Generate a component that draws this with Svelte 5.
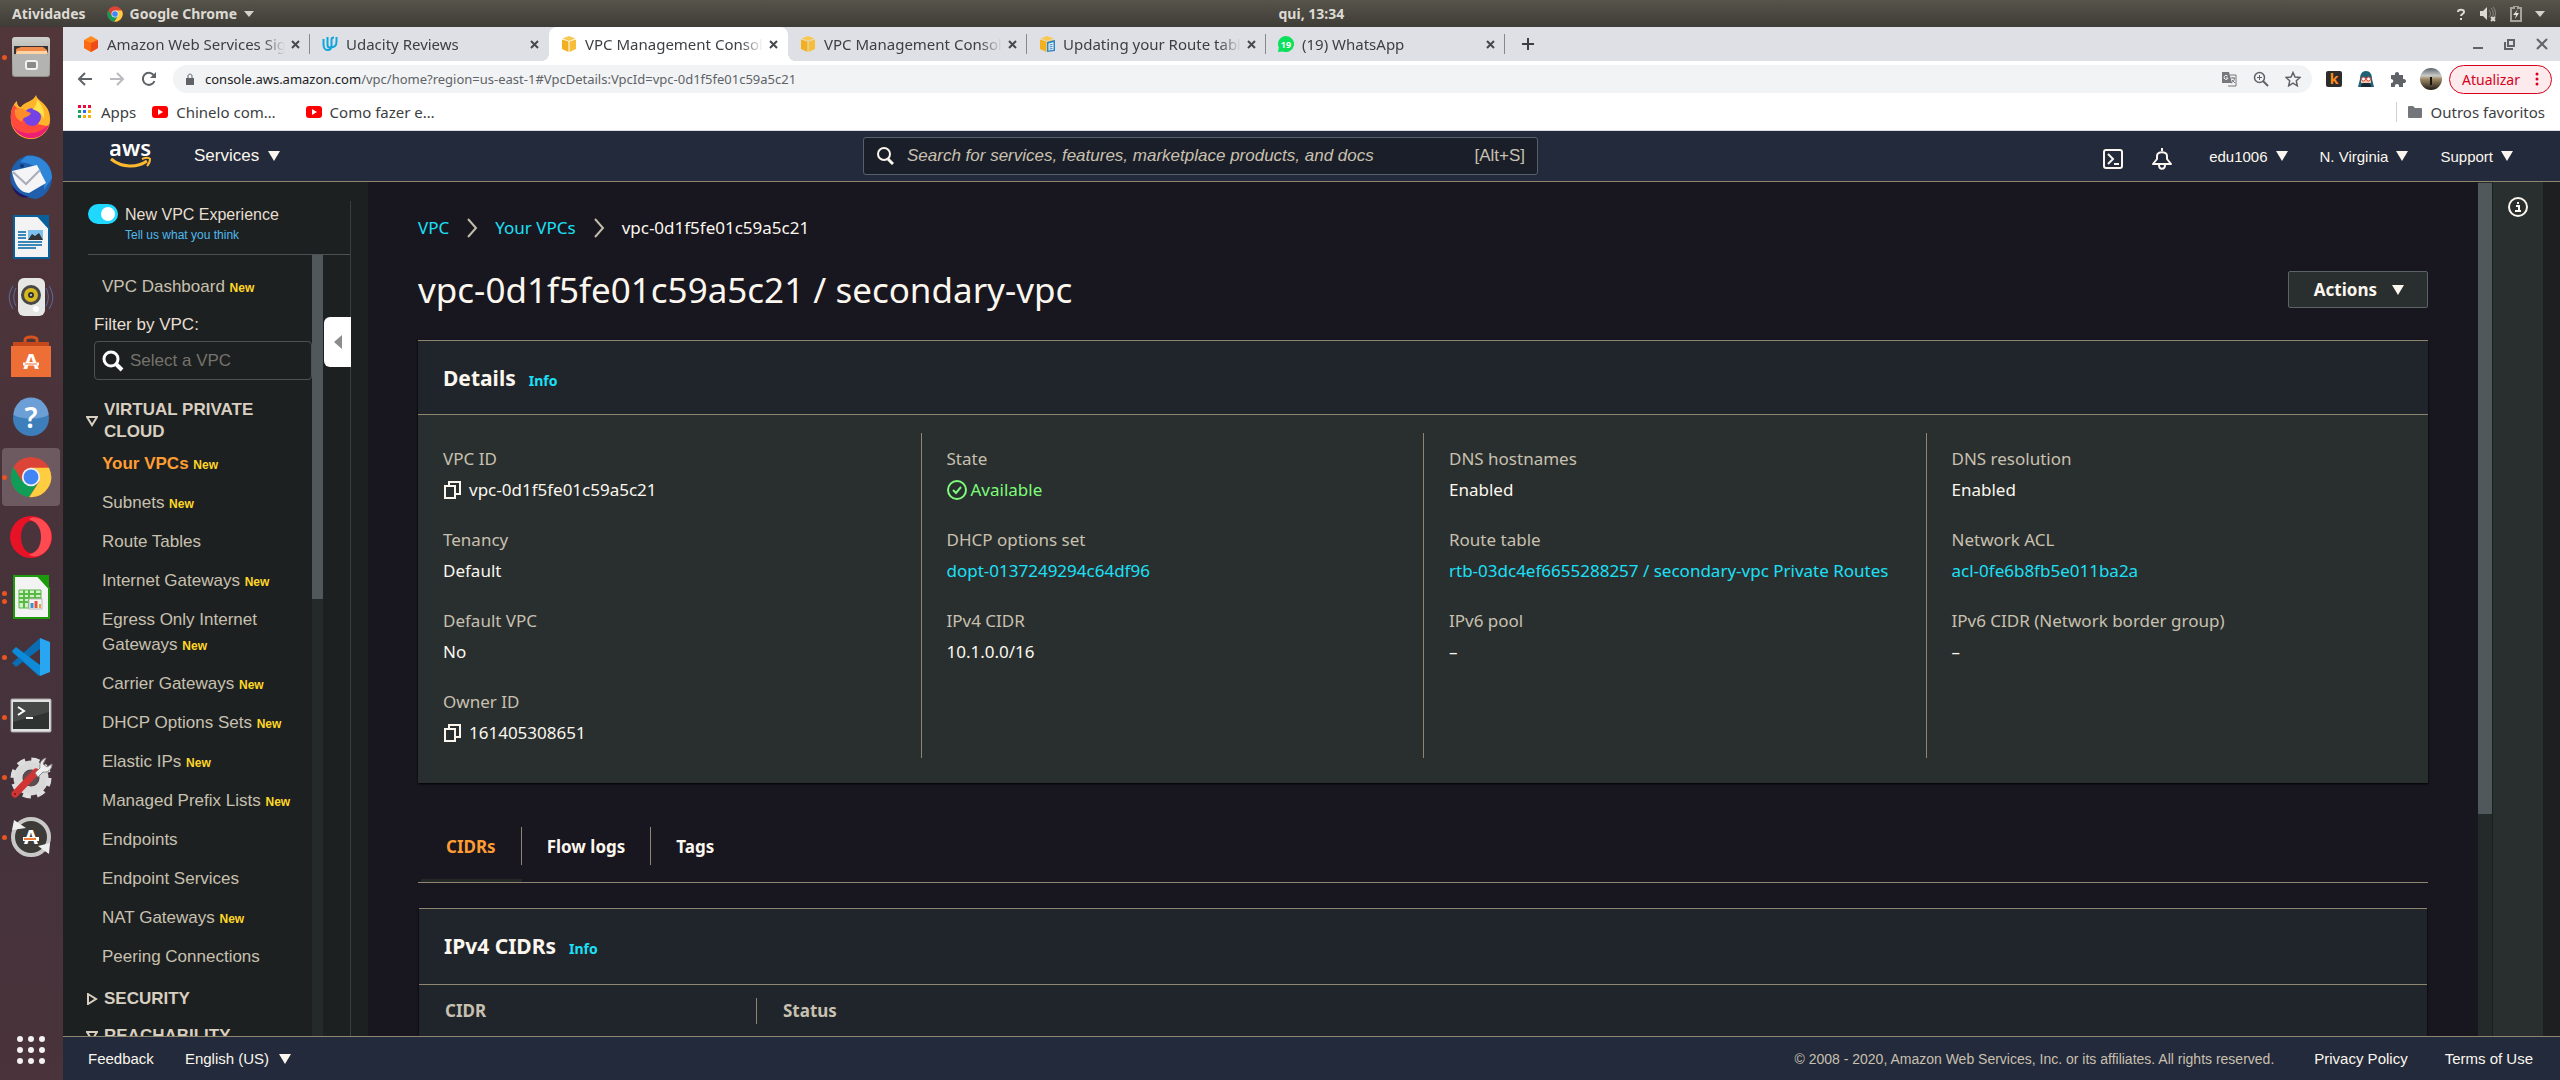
<script>
  const dock = [
    { id: 'files', label: 'Files', dots: 1 },
    { id: 'firefox', label: 'Firefox', dots: 0 },
    { id: 'thunderbird', label: 'Thunderbird', dots: 0 },
    { id: 'writer', label: 'Writer', dots: 0 },
    { id: 'rhythmbox', label: 'Rhythmbox', dots: 0 },
    { id: 'software', label: 'Software', dots: 0 },
    { id: 'help', label: 'Help', dots: 0 },
    { id: 'chrome', label: 'Google Chrome', dots: 1 },
    { id: 'opera', label: 'Opera', dots: 0 },
    { id: 'calc', label: 'Calc', dots: 2 },
    { id: 'vscode', label: 'Visual Studio Code', dots: 1 },
    { id: 'terminal', label: 'Terminal', dots: 1 },
    { id: 'settings', label: 'Settings', dots: 1 },
    { id: 'updater', label: 'Updater', dots: 1 }
  ];

  const tabs = [
    { icon: 'awsbox', title: 'Amazon Web Services Sign-In', sep: true },
    { icon: 'udacity', title: 'Udacity Reviews', sep: false },
    { icon: 'vpc', title: 'VPC Management Console', active: true },
    { icon: 'vpc', title: 'VPC Management Console', sep: true },
    { icon: 'docs', title: 'Updating your Route tables', sep: true },
    { icon: 'whatsapp', title: '(19) WhatsApp', sep: true }
  ];

  const navItems = [
    { text: 'Your VPCs', isNew: true, current: true },
    { text: 'Subnets', isNew: true },
    { text: 'Route Tables' },
    { text: 'Internet Gateways', isNew: true },
    { text: 'Egress Only Internet Gateways', isNew: true },
    { text: 'Carrier Gateways', isNew: true },
    { text: 'DHCP Options Sets', isNew: true },
    { text: 'Elastic IPs', isNew: true },
    { text: 'Managed Prefix Lists', isNew: true },
    { text: 'Endpoints' },
    { text: 'Endpoint Services' },
    { text: 'NAT Gateways', isNew: true },
    { text: 'Peering Connections' }
  ];

  const columns = [
    [
      { label: 'VPC ID', value: 'vpc-0d1f5fe01c59a5c21', kind: 'copy' },
      { label: 'Tenancy', value: 'Default' },
      { label: 'Default VPC', value: 'No' },
      { label: 'Owner ID', value: '161405308651', kind: 'copy' }
    ],
    [
      { label: 'State', value: 'Available', kind: 'ok' },
      { label: 'DHCP options set', value: 'dopt-0137249294c64df96', kind: 'link' },
      { label: 'IPv4 CIDR', value: '10.1.0.0/16' }
    ],
    [
      { label: 'DNS hostnames', value: 'Enabled' },
      { label: 'Route table', value: 'rtb-03dc4ef6655288257 / secondary-vpc Private Routes', kind: 'link' },
      { label: 'IPv6 pool', value: '–' }
    ],
    [
      { label: 'DNS resolution', value: 'Enabled' },
      { label: 'Network ACL', value: 'acl-0fe6b8fb5e011ba2a', kind: 'link' },
      { label: 'IPv6 CIDR (Network border group)', value: '–' }
    ]
  ];

  const detailTabs = ['CIDRs', 'Flow logs', 'Tags'];
  let selected = $state('CIDRs');
  let newExperience = $state(true);
</script>

{#snippet caret()}
  <svg class="caret" viewBox="0 0 12 10" width="12" height="10" aria-hidden="true"><path d="M0 0h12L6 10z" fill="currentColor" /></svg>
{/snippet}

{#snippet chromeLogo(size)}
  <svg width={size} height={size} viewBox="0 0 48 48" aria-hidden="true">
    <circle cx="24" cy="24" r="23" fill="#db4437" />
    <path d="M4 12.500a23 23 0 0 0 18 34.400L33 29 24 24 14 29z" fill="#0f9d58" />
    <path d="M24 13.500h20.500A23 23 0 0 1 22 46.900L33.500 29z" fill="#ffcd40" />
    <circle cx="24" cy="24" r="10.500" fill="#f1f1f1" />
    <circle cx="24" cy="24" r="8.500" fill="#4285f4" />
  </svg>
{/snippet}

{#snippet favicon(name)}
  <svg class="favicon" width="16" height="16" viewBox="0 0 16 16" aria-hidden="true">
    {#if name === 'awsbox'}
      <path d="M8 0l7 4v8l-7 4-7-4V4z" fill="#ff8a1f" />
      <path d="M1 4l7 3v9l-7-4z" fill="#fb6a12" />
      <path d="M15 4L8 7v9l7-4z" fill="#f04a1a" />
    {:else if name === 'udacity'}
      <path d="M1.500 3v5.500c0 3 1.500 5.500 4 5.500s4-2 4-4.500V3.500C9.500 2 11 1.500 12 1.500M5.500 1v8c0 1.500 1 2.500 2.500 2.500 4 0 6.500-2 6.500-5.500V1" fill="none" stroke="#12a5dc" stroke-width="2" />
    {:else if name === 'vpc' || name === 'docs'}
      <path d="M8 0l6.500 2.500L8 5 1.500 2.500z" fill="#f8c950" />
      <path d="M1 3.500l6.500 2V16L1 13z" fill="#f2b01e" />
      <path d="M15 3.500l-6.500 2V16l6.500-3z" fill="#f6be3a" />
      {#if name === 'docs'}
        <path d="M8 6l8-2v11l-8 1z" fill="#2f86c6" />
        <path d="M9.500 7.500l5-1.200v7.500l-5 .7z" fill="#eef6fc" />
        <path d="M10.500 9l3-.6M10.500 11l3-.5M10.500 13l3-.5" stroke="#2f86c6" />
      {/if}
    {:else}
      <path d="M8 0a8 8 0 1 1-3 15.400L0 16l.8-4.500A8 8 0 0 1 8 0z" fill="#0be05a" />
      <text x="8" y="11.500" text-anchor="middle" font-size="9" font-weight="700" fill="#fff">19</text>
    {/if}
  </svg>
{/snippet}

{#snippet dockIcon(id)}
  {#if id === 'chrome'}
    {@render chromeLogo(42)}
  {:else}
    <svg width="46" height="46" viewBox="0 0 46 46" aria-hidden="true">
      {#if id === 'files'}
        <defs><linearGradient id="gf" x1="0" y1="0" x2="0" y2="1"><stop offset="0" stop-color="#cfcfcc" /><stop offset="1" stop-color="#8f8f8c" /></linearGradient></defs>
        <rect x="4" y="3" width="38" height="40" rx="3" fill="url(#gf)" />
        <rect x="6" y="12" width="34" height="9" fill="#3a3230" />
        <path d="M8 21v-6l5-2h22l4 3v5z" fill="#f08a4b" />
        <path d="M8 20l1-3h30l1 3z" fill="#fbd3a5" />
        <rect x="5" y="20" width="36" height="22" rx="2" fill="#b3b3b0" />
        <rect x="18" y="27" width="11" height="8" rx="2" fill="#8b8b88" stroke="#f2f2f2" stroke-width="2" />
      {:else if id === 'firefox'}
        <path d="M28 1c1 6 14 9 14 23A19 19 0 0 1 3 27C2 17 5 10 9 7c0 4 2 6 4 6C16 8 25 8 28 1z" fill="#ffb42b" />
        <path d="M3 25c-1-7 2-13 3-14 4 5 7 4 10 5l3 12 20 4A19 19 0 0 1 3 27z" fill="#ff4a3d" />
        <path d="M5 32c8 10 26 10 36-2-4 18-29 19-36 2z" fill="#ec1f77" />
        <circle cx="24" cy="23" r="9" fill="#7542e5" />
        <path d="M7 15c5-2 9 0 13 3l3 1c-2 5-9 3-9 9-6-3-8-7-7-13z" fill="#ff8c2b" />
        <path d="M29 5c5 6 8 12 7 20-2-6-8-9-12-10 4-2 5-6 5-10z" fill="#ffe14a" />
      {:else if id === 'thunderbird'}
        <path d="M18 2c16-3 27 10 26 23-1 12-10 19-16 20-3 0-18-3-24-14C0 22 3 6 18 2z" fill="#1f5fae" />
        <path d="M18 2c15-2 26 9 26 22l-8 12C38 20 30 10 12 8z" fill="#2f86d8" />
        <path d="M4 17l25-6 9 18-17 10C12 39 6 30 4 17z" fill="#f5f5f7" />
        <path d="M5 18l13 12 14-14" fill="none" stroke="#a9acb8" stroke-width="2" />
        <path d="M4 31c4 7 10 10 17 12-8 2-16-4-17-12z" fill="#1d1463" />
        <circle cx="14" cy="12" r="2" fill="#0c3a75" />
      {:else if id === 'writer' || id === 'calc'}
        {@const c = id === 'writer' ? '#0a5f9a' : '#1c9a0b'}
        <path d="M6 2h24l11 12v30H6z" fill="#f3f3f3" stroke={c} stroke-width="2" />
        <path d="M29 1h12v12z" fill={c} />
        {#if id === 'writer'}
          <path d="M10 18h8M10 21h8M10 24h8M10 28h24M10 31h24M10 34h18" stroke="#3a88b8" stroke-width="2" />
          <rect x="20" y="16" width="15" height="10" fill="#7cc1ee" />
          <path d="M20 26l4-6 3 2 4-3 4 7z" fill="#333" />
        {:else}
          <path d="M11 16h22v18H11z" fill="#d4f0c8" stroke="#58b947" />
          <path d="M11 20h22M11 24h22M11 28h22M16 16v18M21 16v18M27 16v18" stroke="#58b947" stroke-width="2" />
          <rect x="21" y="25" width="13" height="10" fill="#f4f4f4" stroke="#bbb" />
          <path d="M24 34v-5" stroke="#3f8fd2" stroke-width="3" /><path d="M28 34v-7" stroke="#e2553c" stroke-width="3" /><path d="M32 34v-4" stroke="#e8a33b" stroke-width="2" />
        {/if}
      {:else if id === 'rhythmbox'}
        <path d="M5 12c-5 8-5 15 0 23M41 12c5 8 5 15 0 23M8 14c-3 6-3 12 0 18M38 14c3 6 3 12 0 18" fill="none" stroke="#5b6f9f" stroke-width="1" />
        <rect x="10" y="4" width="27" height="38" rx="6" fill="#e6e7e5" />
        <circle cx="23" cy="21" r="10" fill="#474747" />
        <circle cx="23" cy="21" r="7" fill="#d8b821" />
        <circle cx="23" cy="21" r="3" fill="#333" /><circle cx="23" cy="21" r="1" fill="#ddd" />
        <circle cx="28" cy="35" r="3" fill="#fff" />
      {:else if id === 'software'}
        <path d="M17 12V6c0-4 12-4 12 0v6" fill="none" stroke="#d4521d" stroke-width="3" />
        <path d="M5 8h36v6H5z" fill="#c5481a" />
        <path d="M3 12h40v31H3z" fill="#ee6f35" />
        <text x="23" y="35" text-anchor="middle" font-size="22" font-weight="700" fill="#fff">A</text>
        <path d="M15 30h16" stroke="#fff" stroke-width="3" /><path d="M17 30h12" stroke="#ee6f35" />
      {:else if id === 'help'}
        <circle cx="23" cy="24" r="18" fill="#3d7fba" />
        <path d="M5.500 21a17.500 17.500 0 0 1 35 0c-10 5-25 5-35 0z" fill="#6c9fd6" />
        <text x="23" y="34" text-anchor="middle" font-size="28" font-weight="600" fill="#fff">?</text>
      {:else if id === 'opera'}
        <ellipse cx="23" cy="23" rx="21" ry="21" fill="#e81226" />
        <path d="M30 4c18 6 18 32 0 38-4 1-7 0-9-1 14-6 14-30 0-36 3-2 6-2 9-1z" fill="#ff4a52" />
        <ellipse cx="23" cy="23" rx="10" ry="16" fill="#4a333a" />
      {:else if id === 'vscode'}
        <path d="M31 42L4 18l4-4 24 18z" fill="#1080c8" />
        <path d="M4 29l4 4 24-18V4z" fill="#0a6cb2" />
        <path d="M4 17l4-4 24 18v11z" fill="#0d8ad8" />
        <path d="M32 4l10 4v30l-10 4z" fill="#29a6f2" />
      {:else if id === 'terminal'}
        <rect x="3" y="5" width="40" height="33" rx="1" fill="#e2e2e2" stroke="#a6a6a6" />
        <rect x="5" y="8" width="36" height="27" fill="#2e3230" />
        <path d="M5 8h36v10L5 28z" fill="#454846" />
        <path d="M10 13l6 4-6 4M18 24h7" fill="none" stroke="#fff" stroke-width="2" />
      {:else if id === 'settings'}
        <circle cx="23" cy="24" r="13" fill="none" stroke="#d9d9d9" stroke-width="9" />
        <circle cx="23" cy="24" r="18" fill="none" stroke="#dedede" stroke-width="5" stroke-dasharray="8 6.100" />
        <circle cx="23" cy="24" r="8" fill="#5b4d50" />
        <path d="M7 40l21-22" stroke="#d03434" stroke-width="7" stroke-linecap="round" />
        <path d="M27 19l5-5c-1-5 2-9 6-10l-3 6 4 3 5-3c0 6-5 9-9 8l-5 5z" fill="#efefef" stroke="#888" />
        <circle cx="7" cy="40" r="1" fill="#7a1010" />
      {:else}
        <circle cx="23" cy="23" r="18" fill="#3c3b37" stroke="#c9c9c7" stroke-width="4" />
        <path d="M4 16l2-10 12 8z" fill="#efefef" /><path d="M42 29l-1 11-11-8z" fill="#efefef" />
        <text x="23" y="30" text-anchor="middle" font-size="20" font-weight="700" fill="#fff">A</text>
        <path d="M15 25h16" stroke="#fff" stroke-width="4" /><path d="M16 25h12" stroke="#f07c3a" stroke-width="2" />
      {/if}
    </svg>
  {/if}
{/snippet}

<div class="desktop">
  <header class="topbar">
    <div class="top-left">
      <button>Atividades</button>
      <button class="app-menu">
        {@render chromeLogo(16)}
        Google Chrome
        <svg width="10" height="6" viewBox="0 0 10 6" aria-hidden="true"><path d="M0 0h10L5 6z" fill="#d5d2c9" /></svg>
      </button>
    </div>
    <time>qui, 13:34</time>
    <div class="tray">
      <svg width="10" height="16" viewBox="0 0 10 16"><path d="M2 6c0-3 6-3 6 0 0 2-3 2-3 4M5 12v2" fill="none" stroke="#dcdad3" stroke-width="2" /></svg>
      <svg width="18" height="16" viewBox="0 0 18 16"><path d="M1 5h3l4-4v13l-4-4H1z" fill="#dcdad3" /><path d="M10 4c2 2 2 5 0 7M12 2c3 3 3 8 0 11M14 1c3 3 3 8 1 11" fill="none" stroke="#8d8a81" /><path d="M12 11l4 4M16 11l-4 4" stroke="#dcdad3" stroke-width="2" /></svg>
      <svg width="12" height="16" viewBox="0 0 12 16"><path d="M4 0h4v2h3v13H1V2h3z" fill="none" stroke="#a5a299" stroke-width="2" /><path d="M8 3L3 9h3l-1 4 4-6H6z" fill="#e6e4dd" /></svg>
      <svg width="10" height="6" viewBox="0 0 10 6"><path d="M0 0h10L5 6z" fill="#d5d2c9" /></svg>
    </div>
  </header>

  <div class="below">
    <nav class="dock" aria-label="Dock">
      {#each dock as app}
        <button class="dock-app" class:focused={app.id === 'chrome'} aria-label={app.label}>
          {@render dockIcon(app.id)}
          {#if app.dots}
            <span class="dots">{#each Array(app.dots) as _}<i></i>{/each}</span>
          {/if}
        </button>
      {/each}
      <button class="show-apps" aria-label="Show applications">
        {#each Array(9) as _}<i></i>{/each}
      </button>
    </nav>

    <div class="browser">
      <div class="tabstrip">
        {#each tabs as tab}
          <div class="tab" class:active={tab.active} class:sep={tab.sep}>
            {@render favicon(tab.icon)}
            <span class="tab-title">{tab.title}</span>
            <button class="tab-close" aria-label="Close tab">
              <svg width="9" height="9" viewBox="0 0 9 9"><path d="M1 1l7 7M8 1L1 8" stroke="#45484c" stroke-width="2" /></svg>
            </button>
          </div>
        {/each}
        <button class="new-tab" aria-label="New tab">
          <svg width="14" height="14" viewBox="0 0 14 14"><path d="M7 1v12M1 7h12" stroke="#3c4043" stroke-width="2" /></svg>
        </button>
        <div class="win-buttons">
          <button aria-label="Minimize"><svg width="12" height="12" viewBox="0 0 12 12"><path d="M1 10h10" stroke="#5f6368" stroke-width="2" /></svg></button>
          <button aria-label="Restore"><svg width="12" height="12" viewBox="0 0 12 12"><path d="M4 2h6v6H4zM1 4v7h8" fill="none" stroke="#5f6368" stroke-width="2" /></svg></button>
          <button aria-label="Close"><svg width="12" height="12" viewBox="0 0 12 12"><path d="M1 1l10 10M11 1L1 11" stroke="#5f6368" stroke-width="2" /></svg></button>
        </div>
      </div>

      <div class="toolbar">
        <button aria-label="Back"><svg width="16" height="16" viewBox="0 0 16 16"><path d="M15 8H2M8 2L2 8l6 6" fill="none" stroke="#5f6368" stroke-width="2" /></svg></button>
        <button aria-label="Forward"><svg width="16" height="16" viewBox="0 0 16 16"><path d="M1 8h13M8 2l6 6-6 6" fill="none" stroke="#b9bbbe" stroke-width="2" /></svg></button>
        <button aria-label="Reload"><svg width="16" height="16" viewBox="0 0 16 16"><path d="M13.500 10A6 6 0 1 1 12.500 4" fill="none" stroke="#5f6368" stroke-width="2" /><path d="M15 1v6H9z" fill="#5f6368" /></svg></button>
        <div class="omnibox">
          <div class="address">
            <svg width="10" height="12" viewBox="0 0 10 12"><path d="M1 5h8v7H1z" fill="#5f6368" /><path d="M3 5V3c0-2.500 4-2.500 4 0v2" fill="none" stroke="#5f6368" /></svg>
            <span class="url"><b>console.aws.amazon.com</b>/vpc/home?region=us-east-1#VpcDetails:VpcId=vpc-0d1f5fe01c59a5c21</span>
          </div>
          <button aria-label="Translate"><svg width="16" height="16" viewBox="0 0 16 16"><path d="M1 1h7l3 11H1z" fill="#75797d" /><path d="M9 4h6v11H7" fill="none" stroke="#75797d" /><path d="M6.500 5A2 2 0 1 0 7 7H5" fill="none" stroke="#f1f3f4" /><path d="M10 7h4M12 6v1M13.500 7c0 2-1.500 4-3 5M11 9l3 3" fill="none" stroke="#75797d" /></svg></button>
          <button aria-label="Zoom"><svg width="16" height="16" viewBox="0 0 16 16"><circle cx="6.500" cy="6.500" r="5" fill="none" stroke="#5f6368" stroke-width="1.500" /><path d="M10 10l5 5" stroke="#5f6368" stroke-width="2" /><path d="M4 6.500h5M6.500 4v5" stroke="#5f6368" /></svg></button>
          <button aria-label="Bookmark"><svg width="16" height="16" viewBox="0 0 16 16"><path d="M8 1.500l2 4.500 5 .5-3.700 3.300 1 5L8 12.200l-4.300 2.600 1-5L1 6.500 6 6z" fill="none" stroke="#5f6368" stroke-width="1.500" /></svg></button>
        </div>
        <button aria-label="Extension k"><svg width="16" height="16" viewBox="0 0 16 16"><rect width="16" height="16" rx="2" fill="#2c2c2c" /><text x="8" y="13" text-anchor="middle" font-size="14" font-weight="700" fill="#ff8c1a">k</text></svg></button>
        <button aria-label="Extension"><svg width="16" height="16" viewBox="0 0 16 16"><path d="M8 0c4 0 6 3 6 8l2 8H0l2-8c0-5 2-8 6-8z" fill="#1d6375" /><path d="M3 7h10v5H3z" fill="#f0c6ae" /><circle cx="5.500" cy="8" r="2" fill="#fff" stroke="#e03a2e" /><circle cx="10.500" cy="8" r="2" fill="#fff" stroke="#e03a2e" /><path d="M3 16c0-4 2-4 5-4s5 0 5 4z" fill="#1b2733" /></svg></button>
        <button aria-label="Extensions"><svg width="16" height="16" viewBox="0 0 16 16"><path d="M1 4h4c-1-4 5-4 4 0h4v4c4-1 4 5 0 4v4H9c1-4-5-4-4 0H1v-4c3 0 3-4 0-4z" fill="#5f6368" /></svg></button>
        <div class="account">
          <button aria-label="Profile"><svg width="22" height="22" viewBox="0 0 22 22"><defs><linearGradient id="av" x1="0" y1="0" x2="0" y2="1"><stop offset="0" stop-color="#5d666d" /><stop offset=".35" stop-color="#c9cbc8" /><stop offset=".5" stop-color="#a08a66" /><stop offset="1" stop-color="#211b16" /></linearGradient></defs><circle cx="11" cy="11" r="11" fill="url(#av)" /><path d="M11 9v8" stroke="#18120d" stroke-width="2" /></svg></button>
          <button class="update">Atualizar
            <svg width="4" height="14" viewBox="0 0 4 14"><circle cx="2" cy="2" r="1.500" fill="#d5001c" /><circle cx="2" cy="7" r="1.500" fill="#d5001c" /><circle cx="2" cy="12" r="1.500" fill="#d5001c" /></svg>
          </button>
        </div>
      </div>

      <div class="bookmarks">
        <a href="#apps"><svg width="14" height="14" viewBox="0 0 14 14">
          {#each ['#ea0b3c', '#ea0b3c', '#ea0b3c', '#1da362', '#2a6cf0', '#f5b400', '#1da362', '#f5b400', '#f5b400'] as c, i}
            <rect x={(i % 3) * 5} y={Math.floor(i / 3) * 5} width="3" height="3" fill={c} />
          {/each}
        </svg>Apps</a>
        {#each ['Chinelo com…', 'Como fazer e…'] as b}
          <a href="#bookmark" class="yt"><svg width="16" height="12" viewBox="0 0 16 12"><rect width="16" height="12" rx="3" fill="#f00" /><path d="M6 3l5 3-5 3z" fill="#fff" /></svg>{b}</a>
        {/each}
        <a href="#others" class="others"><svg width="14" height="12" viewBox="0 0 14 12"><path d="M0 1q0-1 1-1h4l2 2h6q1 0 1 1v8q0 1-1 1H1q-1 0-1-1z" fill="#73777b" /></svg>Outros favoritos</a>
      </div>

      <div class="console">
        <header class="aws-head">
          <div class="aws-left">
            <a href="#home" aria-label="AWS home"><svg width="42" height="28" viewBox="0 0 42 28">
              <text x="20" y="14" text-anchor="middle" font-size="22" font-weight="600" fill="#fff">aws</text>
              <path d="M1 17c11 9 26 9 36 2" fill="none" stroke="#ffb92e" stroke-width="3" />
              <path d="M32 17c5-2 8-1 8 0s0 4-3 7" fill="none" stroke="#ffb92e" stroke-width="2" />
            </svg></a>
            <button class="services">Services {@render caret()}</button>
          </div>
          <label class="search">
            <svg width="18" height="18" viewBox="0 0 18 18"><circle cx="8" cy="7" r="6" fill="none" stroke="#fbf7ee" stroke-width="2" /><path d="M12 12l5 5" stroke="#fbf7ee" stroke-width="3" /></svg>
            <input type="text" placeholder="Search for services, features, marketplace products, and docs" aria-label="Search" />
            <span>[Alt+S]</span>
          </label>
          <div class="aws-right">
            <div class="tools">
              <button aria-label="CloudShell"><svg width="20" height="20" viewBox="0 0 20 20"><rect x="1" y="1" width="18" height="18" rx="2" fill="none" stroke="#fbf7ee" stroke-width="2" /><path d="M5 5l5 5-5 5M11 15h5" fill="none" stroke="#fbf7ee" stroke-width="2" /></svg></button>
              <button aria-label="Notifications"><svg width="22" height="22" viewBox="0 0 22 22"><path d="M11 0v3M2 16h18l-4-5V8c0-5-10-5-10 0v3zM8 17c0 5 6 5 6 0" fill="none" stroke="#fbf7ee" stroke-width="2" stroke-linejoin="round" /></svg></button>
            </div>
            <button class="menu">edu1006 {@render caret()}</button>
            <button class="menu">N. Virginia {@render caret()}</button>
            <button class="menu">Support {@render caret()}</button>
          </div>
        </header>

        <div class="workspace">
          <aside class="side">
            <div class="side-inner">
              <div class="experience">
                <input id="exp" type="checkbox" bind:checked={newExperience} />
                <div>
                  <label for="exp">New VPC Experience</label>
                  <a href="#feedback">Tell us what you think</a>
                </div>
              </div>
              <div class="side-body">
                <div class="side-scroll">
                  <a class="dash" href="#dashboard">VPC Dashboard <sup>New</sup></a>
                  <label class="filter-label" for="filter">Filter by VPC:</label>
                  <div class="filter">
                    <svg width="22" height="22" viewBox="0 0 22 22"><circle cx="9" cy="9" r="7" fill="none" stroke="#fff" stroke-width="3" /><path d="M14 14l6 6" stroke="#fff" stroke-width="4" /></svg>
                    <input id="filter" type="text" placeholder="Select a VPC" />
                  </div>
                  <button class="group"><svg width="12" height="11" viewBox="0 0 12 11"><path d="M1 1h10L6 9z" fill="none" stroke="#d8cfc0" stroke-width="2" /></svg><span>VIRTUAL PRIVATE CLOUD</span></button>
                  <ul>
                    {#each navItems as item}
                      <li><a href="#nav" class:current={item.current}>{item.text} {#if item.isNew}<sup>New</sup>{/if}</a></li>
                    {/each}
                  </ul>
                  <button class="group closed"><svg width="12" height="12" viewBox="0 0 12 12"><path d="M2 1l8 5-8 5z" fill="none" stroke="#d8cfc0" stroke-width="2" /></svg><span>SECURITY</span></button>
                  <button class="group closed"><svg width="12" height="11" viewBox="0 0 12 11"><path d="M1 1h10L6 9z" fill="none" stroke="#d8cfc0" stroke-width="2" /></svg><span>REACHABILITY</span></button>
                </div>
                <div class="side-bar"><div></div></div>
                <div class="side-gutter">
                  <button aria-label="Collapse navigation"><svg width="8" height="14" viewBox="0 0 8 14"><path d="M8 0v14L0 7z" fill="#8c8c8c" /></svg></button>
                </div>
              </div>
            </div>
          </aside>

          <main>
            <nav class="crumbs" aria-label="Breadcrumb">
              <a href="#vpc">VPC</a>
              <svg width="12" height="20" viewBox="0 0 12 20"><path d="M2 1l8 9-8 9" fill="none" stroke="#c4bcaa" stroke-width="2" /></svg>
              <a href="#vpcs">Your VPCs</a>
              <svg width="12" height="20" viewBox="0 0 12 20"><path d="M2 1l8 9-8 9" fill="none" stroke="#c4bcaa" stroke-width="2" /></svg>
              <span>vpc-0d1f5fe01c59a5c21</span>
            </nav>
            <div class="title-row">
              <h1>vpc-0d1f5fe01c59a5c21 / secondary-vpc</h1>
              <button class="actions">Actions {@render caret()}</button>
            </div>

            <section class="panel">
              <div class="panel-head"><h2>Details</h2><a href="#info">Info</a></div>
              <div class="details">
                {#each columns as col}
                  <dl>
                    {#each col as f}
                      <div>
                        <dt>{f.label}</dt>
                        <dd class:ok={f.kind === 'ok'}>
                          {#if f.kind === 'copy'}
                            <button class="copy" aria-label="Copy"><svg width="18" height="18" viewBox="0 0 18 18"><path d="M2 5h10v12H2zM6 5V1h11v12h-5" fill="none" stroke="#fbf7ee" stroke-width="2" /></svg></button>{f.value}
                          {:else if f.kind === 'ok'}
                            <svg width="20" height="20" viewBox="0 0 20 20"><circle cx="10" cy="10" r="9" fill="none" stroke="#7dfc7a" stroke-width="2" /><path d="M6 10l3 3 5-6" fill="none" stroke="#7dfc7a" stroke-width="2" /></svg>{f.value}
                          {:else if f.kind === 'link'}
                            <a href="#resource">{f.value}</a>
                          {:else}
                            {f.value}
                          {/if}
                        </dd>
                      </div>
                    {/each}
                  </dl>
                {/each}
              </div>
            </section>

            <div class="dtabs" role="tablist">
              {#each detailTabs as t}
                <button role="tab" aria-selected={selected === t} onclick={() => (selected = t)}><span>{t}</span></button>
              {/each}
            </div>

            <section class="panel cidrs">
              <div class="panel-head"><h2>IPv4 CIDRs</h2><a href="#info">Info</a></div>
              <table>
                <thead><tr><th class="c1"><span>CIDR</span></th><th><span>Status</span></th></tr></thead>
              </table>
            </section>
          </main>

          <div class="main-bar"><div></div></div>
          <div class="help-rail">
            <button aria-label="Info"><svg width="20" height="20" viewBox="0 0 20 20"><circle cx="10" cy="10" r="9" fill="none" stroke="#fbf7ee" stroke-width="2" /><path d="M8 9h3v5M7 14h6M9 6h2" fill="none" stroke="#fbf7ee" stroke-width="2" /></svg></button>
          </div>
          <div class="edge"></div>
        </div>

        <footer>
          <a href="#fb">Feedback</a>
          <button class="lang">English (US) {@render caret()}</button>
          <small>© 2008 - 2020, Amazon Web Services, Inc. or its affiliates. All rights reserved.</small>
          <a href="#privacy">Privacy Policy</a>
          <a href="#terms">Terms of Use</a>
        </footer>
      </div>
    </div>
  </div>
</div>

<style>
  :global(body) { margin: 0; background: #18161f; }
  .desktop, .desktop * { box-sizing: border-box; }
  .desktop {
    --ui: "Noto Sans", "Open Sans", sans-serif;
    --arial: "Liberation Sans", Arial, sans-serif;
    --line: #8f8670;
    --cream: #fbf7ee;
    --sand: #c8c0b0;
    --cyan: #1ce0f7;
    display: flex;
    flex-direction: column;
    height: 100vh;
    overflow: hidden;
    font-family: var(--ui);
  }
  button { border: 0; padding: 0; background: none; font: inherit; color: inherit; display: flex; align-items: center; justify-content: center; cursor: pointer; }
  a { color: inherit; text-decoration: none; }
  svg { flex: none; display: block; }
  h1, h2, dl, dd, ul { margin: 0; padding: 0; }

  .topbar { flex: none; display: grid; grid-template-columns: 50% auto 1fr; align-items: center; height: 27px; padding: 0 15px 0 12px; background: linear-gradient(#57544b, #3e3c36); color: #dcdad3; font-size: 14px; font-weight: 700; line-height: 20px; }
  .top-left { display: flex; gap: 21px; }
  .app-menu { gap: 7px; }
  .tray { justify-self: end; display: flex; align-items: center; gap: 13px; }

  .below { flex: 1; display: flex; min-height: 0; }
  .dock { flex: none; width: 63px; display: flex; flex-direction: column; gap: 2px; padding: 1px 3px 8px 2px; background: linear-gradient(#51363a, #49333a 40%, #44323b 75%, #4a333b); }
  .dock-app { flex: none; height: 58px; border-radius: 4px; position: relative; }
  .dock-app.focused { background: #6d5960; }
  .dots { position: absolute; left: 0; display: flex; flex-direction: column; gap: 3px; }
  .dots i { width: 5px; height: 5px; border-radius: 50%; background: #e95420; }
  .show-apps { margin: auto auto 0; width: 44px; height: 44px; display: grid; grid-template-columns: repeat(3, 6px); gap: 5px; align-content: center; }
  .show-apps i { width: 6px; height: 6px; border-radius: 50%; background: #f3f1f1; }

  .browser { flex: 1; min-width: 0; display: flex; flex-direction: column; background: #fff; color: #3c4043; }
  .tabstrip { flex: none; height: 34px; padding-left: 8px; display: flex; align-items: center; background: #dee0e5; font-size: 15px; }
  .tab { flex: 0 1 239px; min-width: 0; height: 34px; display: flex; align-items: center; gap: 8px; padding: 0 7px 0 12px; position: relative; }
  .tab.active { background: #fff; border-radius: 8px 8px 0 0; }
  .tab.active::before, .tab.active::after { content: ""; position: absolute; bottom: 0; width: 8px; height: 8px; }
  .tab.active::before { left: -8px; background: radial-gradient(circle at 0 0, transparent 8px, #fff 8px); }
  .tab.active::after { right: -8px; background: radial-gradient(circle at 100% 0, transparent 8px, #fff 8px); }
  .tab.sep::after { content: ""; position: absolute; right: 0; top: 7px; width: 1px; height: 20px; background: #85888d; }
  .tab-title { flex: 1; min-width: 0; overflow: hidden; white-space: nowrap; line-height: 22px; mask-image: linear-gradient(to left, transparent, #000 22px); margin-right: -6px; }
  .tab-close { flex: none; width: 16px; height: 16px; }
  .new-tab { width: 28px; height: 28px; margin-left: 9px; }
  .win-buttons { margin-left: auto; display: flex; gap: 20px; padding-right: 12px; }

  .toolbar { flex: none; height: 36px; padding: 0 8px 0 14px; display: flex; align-items: center; gap: 16px; }
  .omnibox { flex: 1; min-width: 0; height: 28px; margin-right: -2px; border-radius: 14px; background: #f1f3f4; display: flex; align-items: center; gap: 16px; padding: 0 11px 0 12px; }
  .address { flex: 1; min-width: 0; display: flex; align-items: center; gap: 10px; }
  .url { overflow: hidden; white-space: nowrap; font-size: 13px; line-height: 20px; color: #5f6368; }
  .url b { font-weight: 400; color: #202124; }
  .account { display: flex; align-items: center; gap: 7px; margin-left: -2px; }
  .update { height: 29px; border: 1px solid #d5001c; border-radius: 15px; background: #fdeaec; color: #d5001c; font-size: 14px; padding: 0 12px; gap: 15px; }

  .bookmarks { flex: none; height: 34px; border-bottom: 1px solid #dadce0; padding: 0 15px 4px; display: flex; align-items: center; font-size: 15px; line-height: 20px; }
  .bookmarks a { display: flex; align-items: center; gap: 9px; margin-right: 16px; white-space: nowrap; }
  .bookmarks .yt { gap: 8px; margin-right: 30px; }
  .bookmarks .others { margin: 0 0 0 auto; border-left: 1px solid #d0d2d5; padding-left: 11px; }

  .console { flex: 1; min-height: 0; display: flex; flex-direction: column; font-family: var(--arial); color: var(--cream); background: #18161f; }
  .aws-head { flex: none; height: 51px; border-bottom: 1px solid var(--line); background: #232a3b; display: flex; align-items: center; }
  .aws-left { flex: 0 1 800px; display: flex; align-items: center; gap: 42px; padding-left: 47px; }
  .aws-left text { font-family: var(--ui); }
  .services { font-size: 17px; gap: 9px; }
  .search { flex: 0 1 675px; height: 38px; border: 1px solid #596069; border-radius: 3px; background: #1a1e28; display: flex; align-items: center; gap: 13px; padding: 0 12px; }
  .search input { flex: 1; min-width: 0; border: 0; padding: 0; background: none; outline: 0; font: italic 17px var(--arial); color: var(--cream); }
  .search input::placeholder { color: var(--sand); opacity: 1; }
  .search span { font-size: 17px; color: var(--sand); }
  .aws-right { margin-left: auto; padding-right: 47px; display: flex; align-items: center; gap: 32px; font-size: 15px; }
  .tools { display: flex; align-items: center; gap: 28px; padding: 6px 4px 0 0; }
  .menu { gap: 8px; white-space: nowrap; }

  .workspace { flex: 1; min-height: 0; display: flex; }
  .side { flex: none; width: 305px; padding: 19px 17px 0 23px; background: #1d2021; color: var(--sand); font-size: 17px; }
  .side-inner { height: 100%; display: flex; flex-direction: column; border-right: 1px solid #37413f; }
  .experience { flex: none; height: 54px; margin-left: 2px; border-bottom: 1px solid #4b5050; display: flex; gap: 7px; padding-top: 3px; }
  .experience input { appearance: none; margin: 0; width: 30px; height: 20px; border-radius: 10px; background: #1fd8ff; display: flex; align-items: center; justify-content: flex-end; padding: 0 3px; }
  .experience input::before { content: ""; width: 14px; height: 14px; border-radius: 50%; background: #fff; }
  .experience div { display: flex; flex-direction: column; }
  .experience label { font-size: 16px; line-height: 21px; color: #e6dfd2; }
  .experience a { font-size: 12px; line-height: 20px; color: #4fb9ee; }
  .side-body { flex: 1; min-height: 0; display: flex; }
  .side-scroll { flex: 1; min-width: 0; overflow: hidden; padding-top: 19px; }
  .side-scroll a { line-height: 25px; }
  sup { font-size: 12px; font-weight: 700; color: #ffd726; vertical-align: baseline; line-height: 12px; }
  .dash { display: block; padding-left: 16px; }
  .filter-label { display: block; margin: 13px 0 4px 8px; line-height: 25px; color: #e6dfd2; }
  .filter { margin-left: 8px; height: 39px; border: 1px solid #4b5352; border-radius: 4px; display: flex; align-items: center; gap: 6px; padding: 0 7px; }
  .filter input { flex: 1; min-width: 0; border: 0; padding: 0; outline: 0; background: none; font: 17px var(--arial); color: var(--cream); }
  .filter input::placeholder { color: #75726b; opacity: 1; }
  .group { width: 100%; justify-content: flex-start; gap: 6px; margin-top: 19px; text-align: left; font-weight: 700; line-height: 22px; color: #d8cfc0; }
  .group span { max-width: 170px; }
  .group.closed { margin-top: 15px; }
  ul { list-style: none; padding: 8px 8px 0 16px; display: flex; flex-direction: column; gap: 14px; }
  li { line-height: 25px; }
  ul + .group.closed { margin-top: 19px; }
  .current { font-weight: 700; color: #ff9d33; }
  .side-bar { flex: none; width: 11px; background: #242a2a; }
  .side-bar div { height: 44%; background: #51585b; }
  .side-gutter { flex: none; width: 27px; padding: 62px 0 0 1px; }
  .side-gutter button { width: 27px; height: 50px; border-radius: 6px 0 0 6px; background: #fff; }

  main { flex: 1; min-width: 0; overflow: hidden; padding: 32px 50px 0; font-family: var(--ui); font-size: 17px; line-height: 27px; }
  main a { color: var(--cyan); }
  .crumbs { display: flex; align-items: center; gap: 17px; }
  .title-row { display: flex; align-items: center; justify-content: space-between; margin: 24px 0 26px; }
  h1 { font-size: 35px; font-weight: 400; line-height: 49px; }
  .actions { height: 37px; border: 1px solid #5c6365; border-radius: 2px; background: #292f2f; font-weight: 700; gap: 15px; padding: 0 23px 0 25px; }
  .panel { flex: none; border-top: 1px solid var(--line); background: #292f2f; box-shadow: 0 1px 2px #000; }
  .panel-head { height: 74px; border-bottom: 1px solid var(--line); background: #20252b; display: flex; align-items: baseline; gap: 13px; padding: 22px 25px 0; }
  h2 { font-size: 21px; font-weight: 700; line-height: 30px; }
  .panel-head a { font-size: 14px; font-weight: 700; }
  .details { display: grid; grid-template-columns: repeat(4, 1fr); padding: 18px 0 25px; }
  dl { display: flex; flex-direction: column; gap: 23px; padding: 12px 25px; border-left: 1px solid transparent; }
  dl:first-child { padding-left: 24px; }
  dl + dl { border-left-color: var(--line); }
  dt { color: var(--sand); }
  dd { margin-top: 4px; display: flex; align-items: center; white-space: nowrap; }
  .copy { margin-right: 8px; }
  dd.ok { color: #7dfc7a; gap: 4px; }

  .dtabs { display: flex; margin-top: 44px; padding-left: 3px; border-bottom: 1px solid var(--line); font-weight: 700; }
  .dtabs button { align-items: flex-start; height: 55px; }
  .dtabs button span { display: flex; align-items: center; height: 38px; padding: 0 25px; border-right: 1px solid var(--line); }
  .dtabs button:last-child span { border-right: 0; }
  .dtabs button[aria-selected="true"] { color: #ff9d33; border-bottom: 3px solid #232827; }
  .cidrs { margin: 25px 1px 0; background: #20252b; }
  .cidrs .panel-head { height: 76px; }
  table { width: 100%; border-collapse: collapse; }
  th { padding: 13px 0; text-align: left; font-weight: 700; line-height: 26px; color: var(--sand); }
  th span { display: block; padding-left: 26px; }
  .c1 { width: 338px; }
  .c1 span { border-right: 1px solid var(--line); }

  .main-bar { flex: none; width: 15px; padding-top: 1px; background: #242a2a; border-right: 1px solid #1a1e1e; }
  .main-bar div { height: 74%; background: #51585b; }
  .help-rail { flex: none; width: 50px; background: #292f2f; padding-top: 15px; }
  .help-rail button { margin: 0 auto; }
  .edge { flex: none; width: 17px; background: #1d1f20; }

  footer { flex: none; height: 44px; border-top: 1px solid var(--line); background: #232a3b; display: flex; align-items: center; padding: 0 27px 0 25px; font-size: 15px; }
  .lang { margin-left: 31px; gap: 10px; }
  small { margin-left: auto; font-size: 14px; color: var(--sand); }
  small + a { margin: 0 37px 0 40px; }
</style>
